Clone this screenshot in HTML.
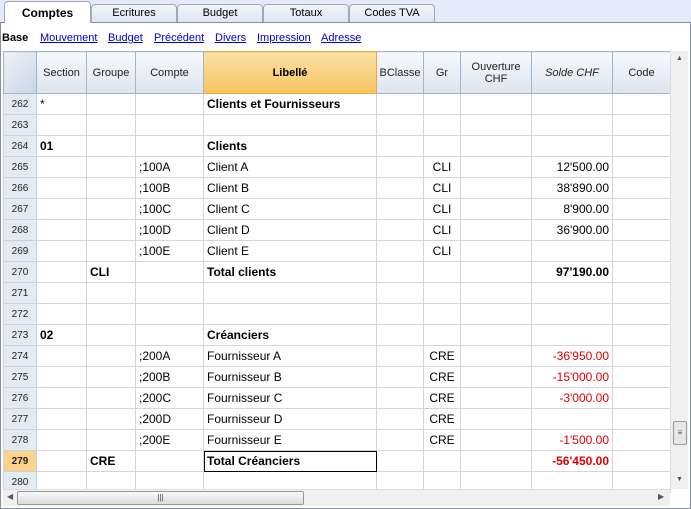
<!DOCTYPE html><html><head><style>
body{margin:0;width:691px;height:509px;background:#fff;font-family:"Liberation Sans",sans-serif;position:relative;overflow:hidden}
.tabbar{position:absolute;left:0;top:0;width:691px;height:22px;background:#e3eafa}
.tab{position:absolute;top:4px;height:17px;border:1px solid #a0a8b8;border-bottom:none;border-radius:4px 4px 0 0;background:linear-gradient(#f4f6fb,#dfe5f2);font-size:11px;text-align:center;line-height:17px;color:#000}
.tab.a{top:1px;height:21px;background:#fff;font-weight:bold;font-size:12px;line-height:22px;z-index:2}
.frame{position:absolute;left:0;top:22px;width:689px;height:485px;border:1px solid #8a9099}
.links{position:absolute;top:32px;left:2px;font-size:11px;white-space:nowrap}
.links a,.links span{position:absolute;top:0}
.links a{color:#0000cc;text-decoration:underline}
table{position:absolute;left:3px;top:51px;border-collapse:collapse;table-layout:fixed;font-size:12px}
td{border:1px solid #d6d6d6;height:20px;padding:0 3px;white-space:nowrap;overflow:hidden}
th{height:41px;border:1px solid #9fb6cf;background:linear-gradient(#f7f9fc,#dde5ef);font-weight:normal;font-size:11px;color:#222;padding:0}
th.lib{background:linear-gradient(#fbe1a8,#f7c35e);border-color:#f0a640;font-weight:bold;color:#000}
td.n{background:#e2eaf4;color:#222;font-size:10px;text-align:center;border-color:#c7d3e2}
td.hl{background:#fbd38a;font-weight:bold}
.b{font-weight:bold}.r{text-align:right}.red{color:#e00000}.c{text-align:center}
.vs{position:absolute;left:670px;top:51px;width:17px;height:438px;background:#f0f0f0;border-left:1px solid #ddd}
.hs{position:absolute;left:3px;top:489px;width:667px;height:16px;background:#f0f0f0;border-top:1px solid #ddd}
</style></head><body>
<div class="tabbar"></div>
<div class="frame"></div>
<div class="tab a" style="left:4px;width:85px">Comptes</div>
<div class="tab" style="left:91px;width:84px">Ecritures</div>
<div class="tab" style="left:177px;width:84px">Budget</div>
<div class="tab" style="left:263px;width:84px">Totaux</div>
<div class="tab" style="left:349px;width:84px">Codes TVA</div>
<div class="links"><span class="b" style="left:0">Base</span><a style="left:38px">Mouvement</a><a style="left:106px">Budget</a><a style="left:152px">Précédent</a><a style="left:213px">Divers</a><a style="left:255px">Impression</a><a style="left:319px">Adresse</a></div>
<table>
<colgroup><col style="width:33px"><col style="width:50px"><col style="width:49px"><col style="width:68px"><col style="width:173px"><col style="width:47px"><col style="width:37px"><col style="width:71px"><col style="width:81px"><col style="width:58px"></colgroup>
<tr><th style="background:linear-gradient(135deg,#eef2f8,#c9d6e6)"></th><th>Section</th><th>Groupe</th><th>Compte</th><th class="lib">Libellé</th><th>BClasse</th><th>Gr</th><th>Ouverture<br>CHF</th><th><i>Solde CHF</i></th><th>Code</th></tr>
<tr><td class="n">262</td><td>*</td><td></td><td></td><td class="b">Clients et Fournisseurs</td><td></td><td></td><td></td><td></td><td></td></tr>
<tr><td class="n">263</td><td></td><td></td><td></td><td></td><td></td><td></td><td></td><td></td><td></td></tr>
<tr><td class="n">264</td><td class="b">01</td><td></td><td></td><td class="b">Clients</td><td></td><td></td><td></td><td></td><td></td></tr>
<tr><td class="n">265</td><td></td><td></td><td>;100A</td><td>Client A</td><td></td><td class="c">CLI</td><td></td><td class="r">12'500.00</td><td></td></tr>
<tr><td class="n">266</td><td></td><td></td><td>;100B</td><td>Client B</td><td></td><td class="c">CLI</td><td></td><td class="r">38'890.00</td><td></td></tr>
<tr><td class="n">267</td><td></td><td></td><td>;100C</td><td>Client C</td><td></td><td class="c">CLI</td><td></td><td class="r">8'900.00</td><td></td></tr>
<tr><td class="n">268</td><td></td><td></td><td>;100D</td><td>Client D</td><td></td><td class="c">CLI</td><td></td><td class="r">36'900.00</td><td></td></tr>
<tr><td class="n">269</td><td></td><td></td><td>;100E</td><td>Client E</td><td></td><td class="c">CLI</td><td></td><td></td><td></td></tr>
<tr><td class="n">270</td><td></td><td class="b">CLI</td><td></td><td class="b">Total clients</td><td></td><td></td><td></td><td class="r b">97'190.00</td><td></td></tr>
<tr><td class="n">271</td><td></td><td></td><td></td><td></td><td></td><td></td><td></td><td></td><td></td></tr>
<tr><td class="n">272</td><td></td><td></td><td></td><td></td><td></td><td></td><td></td><td></td><td></td></tr>
<tr><td class="n">273</td><td class="b">02</td><td></td><td></td><td class="b">Créanciers</td><td></td><td></td><td></td><td></td><td></td></tr>
<tr><td class="n">274</td><td></td><td></td><td>;200A</td><td>Fournisseur A</td><td></td><td class="c">CRE</td><td></td><td class="r red">-36'950.00</td><td></td></tr>
<tr><td class="n">275</td><td></td><td></td><td>;200B</td><td>Fournisseur B</td><td></td><td class="c">CRE</td><td></td><td class="r red">-15'000.00</td><td></td></tr>
<tr><td class="n">276</td><td></td><td></td><td>;200C</td><td>Fournisseur C</td><td></td><td class="c">CRE</td><td></td><td class="r red">-3'000.00</td><td></td></tr>
<tr><td class="n">277</td><td></td><td></td><td>;200D</td><td>Fournisseur D</td><td></td><td class="c">CRE</td><td></td><td></td><td></td></tr>
<tr><td class="n">278</td><td></td><td></td><td>;200E</td><td>Fournisseur E</td><td></td><td class="c">CRE</td><td></td><td class="r red">-1'500.00</td><td></td></tr>
<tr><td class="n hl">279</td><td></td><td class="b">CRE</td><td></td><td class="b" style="outline:1px solid #000;outline-offset:-1px;border-color:#000">Total Créanciers</td><td></td><td></td><td></td><td class="r red b">-56'450.00</td><td></td></tr>
<tr><td class="n">280</td><td></td><td></td><td></td><td></td><td></td><td></td><td></td><td></td><td></td></tr>
</table>
<div class="vs"><div style="position:absolute;top:4px;left:5px;font-size:7px;color:#555">▲</div><div style="position:absolute;top:370px;left:2px;width:12px;height:22px;background:#e8e8e8;border:1px solid #999;border-radius:2px;font-size:8px;text-align:center;line-height:22px;color:#555">≡</div><div style="position:absolute;top:425px;left:5px;font-size:7px;color:#555">▼</div></div>
<div class="hs"><div style="position:absolute;left:4px;top:2px;font-size:8px;color:#555">◀</div><div style="position:absolute;left:14px;top:1px;width:285px;height:12px;background:linear-gradient(#f8f8f8,#dcdcdc);border:1px solid #999;border-radius:2px;font-size:8px;text-align:center;line-height:12px;color:#444">|||</div><div style="position:absolute;left:655px;top:2px;font-size:8px;color:#555">▶</div></div>
</body></html>
